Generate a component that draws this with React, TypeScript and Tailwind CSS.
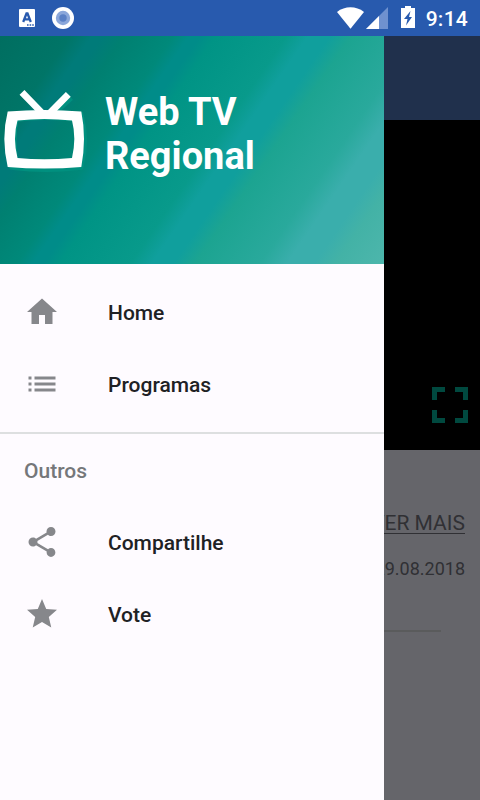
import type { ReactNode } from 'react';

function Icon({ children }: { children: ReactNode }) {
  return (
    <svg className="w-9 h-9 shrink-0" viewBox="0 0 24 24" fill="#86878b">
      {children}
    </svg>
  );
}

function MenuItem({ label, children }: { label: string; children: ReactNode }) {
  return (
    <a href="#" className="flex items-center h-[72px] px-6 gap-12 text-[21px] font-medium text-[#202124]">
      <Icon>{children}</Icon>
      <span className="pt-[3px]">{label}</span>
    </a>
  );
}

function StatusBar() {
  return (
    <div className="flex items-center justify-between h-9 bg-[#285aae] pl-[18px] pr-3">
      <div className="flex items-center gap-4">
        <svg className="w-[18px] h-[18px]" viewBox="0 0 18 18">
          <rect x="1" width="16" height="18" rx="1" fill="#fff" />
          <path d="M5.200 13 8.500 4.500h1L12.800 13M6.600 10.300h4.800" fill="none" stroke="#285aae" strokeWidth="2.300" />
          <path d="M9 15.300h1.600v1.400H9zM11.600 15.300h1.600v1.400h-1.600zM14.200 15.300h1.600v1.400h-1.600z" fill="#285aae" />
        </svg>
        <svg className="w-[22px] h-[22px]" viewBox="0 0 22 22">
          <circle cx="11" cy="11" r="11" fill="#fff" />
          <circle cx="11" cy="11" r="7.200" fill="#8ba7da" />
          <circle cx="11" cy="11" r="3.700" fill="#5a80c5" />
        </svg>
      </div>
      <div className="flex items-center">
        <svg className="w-[27px] h-[22px]" viewBox="0 0 27 22">
          <path d="M0 4.900C8-1.200 19-1.200 27 4.900L13.500 21.700Z" fill="#fff" />
        </svg>
        <svg className="ml-[2px] w-[22px] h-[22px]" viewBox="0 0 22 22">
          <path d="M0 22 22 0v22z" fill="#6f91cf" />
          <path d="M0 22 13 9v13z" fill="#fff" />
        </svg>
        <svg className="ml-[13px] mb-[2px] w-[14px] h-[22px]" viewBox="0 0 14 22">
          <path d="M4 0h6v2h4v20H0V2h4z" fill="#fff" />
          <path d="M9.500 5 3 13h3.500l-1.500 6.500 6-8.500H8z" fill="#285aae" />
        </svg>
        <span className="ml-[11px] mt-[2px] text-[21px] leading-none tracking-[0.25px] font-medium text-white">9:14</span>
      </div>
    </div>
  );
}

export default function App() {
  return (
    <div className="relative w-[480px] h-[800px] overflow-hidden bg-[#65656a] font-[Roboto,sans-serif]">
      <StatusBar />

      {/* Dimmed page behind the drawer */}
      <div className="h-[84px] bg-[#20304c]" />
      <div className="flex items-end justify-end h-[330px] bg-black pr-3 pb-[27px]">
        <svg className="w-9 h-9" viewBox="0 0 36 36" fill="none" stroke="#00493f" strokeWidth="5">
          <path d="M2.500 13V2.500H13M23 2.500h10.500V13M33.500 23v10.500H23M13 33.500H2.500V23" />
        </svg>
      </div>
      <div className="flex flex-col items-end pt-[61px] pr-[15px] text-[#303034]">
        <span className="text-[21px] leading-6 underline decoration-[1px] underline-offset-[3px]">VER MAIS</span>
        <span className="mt-[23px] text-[18px] leading-[21px]">29.08.2018</span>
        <div className="mt-[51px] mr-6 w-[402px] h-[2px] bg-[#5a5b5c]" />
      </div>

      {/* Drawer */}
      <div className="absolute top-9 left-0 w-96 h-[764px] bg-[#fefbff]">
        <div className="flex h-[228px] bg-[linear-gradient(124.5deg,#006e60_0%,#007567_13%,#007b79_17%,#007b79_19%,#008071_23%,#00897a_32%,#008c89_35%,#008c89_37%,#009485_40%,#089a8b_53%,#109f9d_57%,#109f9d_61%,#1ca491_65%,#29a99c_77%,#3aaeac_82%,#3aaeac_87%,#43b2a6_91%,#4db6ac_100%)]">
          <svg className="mt-[52px] w-[88px] h-[84px] shrink-0" viewBox="0 0 88 84">
            <g fill="none" stroke="#00907f">
              <path d="M54 25 71 9.500" strokeWidth="6" />
              <path d="M14 29Q46 25 79 29Q85 52 79 77Q46 81 14 77Q9 52 14 29Z" strokeWidth="10" />
            </g>
            <path d="M22 4.300 43 26M68.300 6.300 49 26" fill="none" stroke="#fff" strokeWidth="6.800" />
            <path
              fill="#fff"
              fillRule="evenodd"
              d="M7.700 23.500Q44 20.500 81.300 23.500Q86.700 50 81.300 79Q44 82 7.700 79Q1 50 7.700 23.500ZM17.500 32.500Q12.500 50 17.500 70Q44 72.500 72 70Q76.600 50 72 32.500Q44 29.500 17.500 32.500Z"
            />
          </svg>
          <h1 className="ml-[17px] mt-[54px] text-[38px] leading-[44px] font-bold text-white">
            Web TV
            <br />
            Regional
          </h1>
        </div>

        <nav className="pt-3">
          <MenuItem label="Home">
            <path d="M10 20v-6h4v6h5v-8h3L12 3 2 12h3v8z" />
          </MenuItem>
          <MenuItem label="Programas">
            <path d="M3 13h2v-2H3v2zm0 4h2v-2H3v2zm0-8h2V7H3v2zm4 4h14v-2H7v2zm0 4h14v-2H7v2zM7 7v2h14V7H7z" />
          </MenuItem>
          <div className="mt-3 h-[2px] bg-[#dddfe0]" />
          <h2 className="h-[72px] pl-6 leading-[74px] text-[21px] font-medium text-[#75777a]">Outros</h2>
          <MenuItem label="Compartilhe">
            <path d="M18 16.080c-.76 0-1.440.3-1.960.77L8.910 12.700c.05-.23.09-.46.09-.7s-.04-.47-.09-.7l7.050-4.110c.54.5 1.250.81 2.040.81 1.660 0 3-1.340 3-3s-1.340-3-3-3-3 1.340-3 3c0 .24.04.47.09.7L8.040 9.810C7.500 9.310 6.790 9 6 9c-1.660 0-3 1.340-3 3s1.340 3 3 3c.79 0 1.500-.31 2.040-.81l7.120 4.160c-.05.21-.08.43-.08.65 0 1.610 1.310 2.920 2.920 2.920s2.920-1.310 2.920-2.920-1.310-2.920-2.920-2.920z" />
          </MenuItem>
          <MenuItem label="Vote">
            <path d="M12 17.270 18.180 21l-1.640-7.030L22 9.240l-7.190-.61L12 2 9.190 8.630 2 9.240l5.460 4.730L5.820 21z" />
          </MenuItem>
        </nav>
      </div>
    </div>
  );
}
